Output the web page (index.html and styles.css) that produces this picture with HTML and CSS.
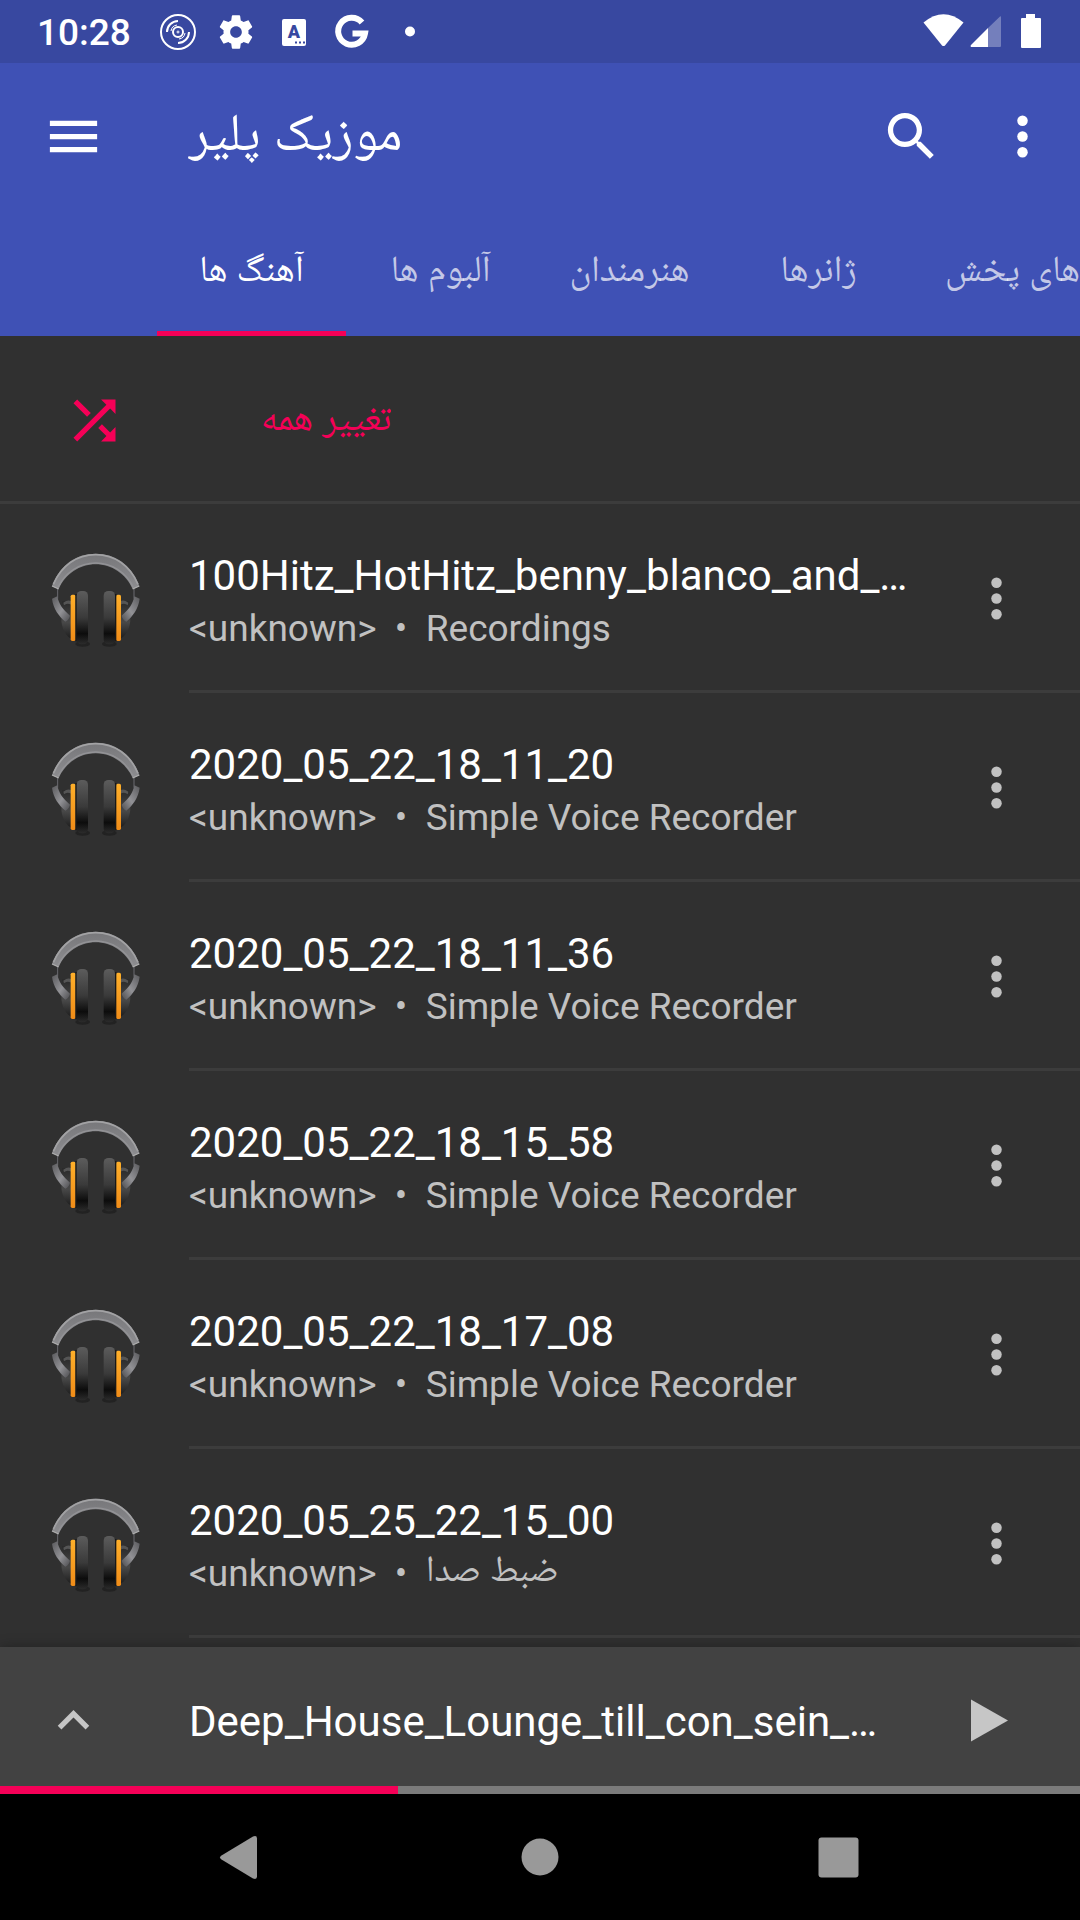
FILE: index.html
```html
<!DOCTYPE html>
<html lang="fa">
<head>
<meta charset="utf-8">
<meta name="viewport" content="width=device-width, initial-scale=1">
<title>موزیک پلیر</title>
<link rel="stylesheet" href="styles.css">
</head>
<body>
<svg class="sprite" aria-hidden="true">
  <defs>
    <linearGradient id="band" x1="0" y1="0" x2="0" y2="1">
      <stop offset="0" stop-color="#77777a"/><stop offset="1" stop-color="#8d8d90"/>
    </linearGradient>
    <linearGradient id="pad" x1="0" y1="0" x2="0" y2="1">
      <stop offset="0" stop-color="#5c5c5c"/><stop offset=".5" stop-color="#3a3a3a"/><stop offset=".8" stop-color="#0c0c0c"/><stop offset="1" stop-color="#2c2c2c"/>
    </linearGradient>
    <linearGradient id="shell" x1="0" y1="0" x2="0" y2="1">
      <stop offset="0" stop-color="#2a2a2a"/><stop offset=".55" stop-color="#484848"/><stop offset="1" stop-color="#1c1c1c"/>
    </linearGradient>
    <linearGradient id="arm" x1="0" y1="0" x2="1" y2="1">
      <stop offset="0" stop-color="#5a5a5d"/><stop offset=".55" stop-color="#929296"/><stop offset="1" stop-color="#4c4c4f"/>
    </linearGradient>
    <linearGradient id="ring" x1="0" y1="0" x2="0" y2="1">
      <stop offset="0" stop-color="#ffb02a"/><stop offset="1" stop-color="#f08c18"/>
    </linearGradient>
    <g id="cup">
      <path d="M96 214h32v114c-18-4-36-34-34-66z" fill="url(#shell)"/>
      <path d="M100 218q14-10 24-4v10q-14-6-22 2z" fill="#555"/>
      <path d="M83 176v30" stroke="#6a6a70" stroke-width="3"/>
      <path d="M66 206l16-7c4 22 16 40 38 58-2 8-6 14-14 18C86 258 70 236 66 206z" fill="url(#arm)"/>
      <rect x="122" y="194" width="15" height="139" rx="5" fill="url(#ring)"/>
      <rect x="136" y="192" width="6" height="142" fill="#181818"/>
      <rect x="140" y="183" width="34" height="160" rx="14" fill="url(#pad)"/>
    </g>
  </defs>
  <symbol id="headphones" viewBox="36 48 315 315">
    <ellipse cx="158" cy="342" rx="22" ry="8" fill="#222"/>
    <ellipse cx="238" cy="342" rx="22" ry="8" fill="#222"/>
    <use href="#cup"/>
    <use href="#cup" transform="translate(395 0) scale(-1 1)"/>
    <path d="M66 168C90 105 138 71 197 71s108 34 131 97l-20 9C288 132 245 103 197 103s-91 29-111 74z" fill="url(#band)"/>
    <path d="M70 163C94 107 140 74 197 74s104 33 127 89" fill="none" stroke="#a2a2a4" stroke-width="5"/>
    <path d="M84 172C106 127 148 99 197 99s91 28 113 73" fill="none" stroke="#939396" stroke-width="4"/>
    <path d="M66 168l20 9M328 168l-20 9" stroke="#b0b0b0" stroke-width="4"/>
  </symbol>
  <symbol id="more" viewBox="0 0 24 24">
    <circle cx="12" cy="6" r="2"/><circle cx="12" cy="12" r="2"/><circle cx="12" cy="18" r="2"/>
  </symbol>
</svg>

<div class="app">
  <header class="header">
    <div class="status" dir="ltr">
      <time class="clock">10:28</time>
      <div class="notices">
        <svg class="notice" viewBox="0 0 40 40" fill="none" stroke="#fff">
          <circle cx="20" cy="20" r="17" stroke-width="2"/>
          <circle cx="20" cy="20" r="5" stroke-width="2"/><circle cx="20" cy="20" r="1" stroke-width="1"/>
          <path d="M9 20A11 11 0 0 1 20 9M31 20A11 11 0 0 1 20 31" stroke-width="2"/>
          <path d="M13 19a7 7 0 0 1 6-6M27 21a7 7 0 0 1-6 6" stroke-width="1"/>
        </svg>
        <svg class="notice" viewBox="0 0 24 24" fill="#fff"><path d="M19.43 12.98c.04-.32.07-.64.07-.98s-.03-.66-.07-.98l2.11-1.65c.19-.15.24-.42.12-.64l-2-3.46c-.12-.22-.39-.3-.61-.22l-2.49 1c-.52-.4-1.08-.73-1.69-.98l-.38-2.65C14.46 2.18 14.25 2 14 2h-4c-.25 0-.46.18-.49.42l-.38 2.65c-.61.25-1.17.59-1.69.98l-2.49-1c-.23-.09-.49 0-.61.22l-2 3.46c-.13.22-.07.49.12.64l2.11 1.65c-.04.32-.07.65-.07.98s.03.66.07.98l-2.11 1.65c-.19.15-.24.42-.12.64l2 3.46c.12.22.39.3.61.22l2.49-1c.52.4 1.08.73 1.69.98l.38 2.65c.03.24.24.42.49.42h4c.25 0 .46-.18.49-.42l.38-2.65c.61-.25 1.17-.59 1.69-.98l2.49 1c.23.09.49 0 .61-.22l2-3.46c.12-.22.07-.49-.12-.64l-2.11-1.65zM12 15.5c-1.93 0-3.5-1.57-3.5-3.5s1.57-3.5 3.5-3.5 3.5 1.57 3.5 3.5-1.57 3.5-3.5 3.5z"/></svg>
        <svg class="notice" viewBox="0 0 40 40"><rect x="8" y="7" width="24" height="27" rx="2" fill="#fff"/><text class="badge-letter" x="20" y="26" text-anchor="middle">A</text><path d="M21 30.500h2m2 0h2m2 0h2" stroke="#3848a0" stroke-width="2"/></svg>
        <svg class="notice" viewBox="0 0 40 40" fill="none" stroke="#fff" stroke-width="6"><path d="M30 10.500A13.500 13.500 0 1 0 33 21.500H20.500"/></svg>
        <svg class="notice" viewBox="0 0 40 40" fill="#fff"><circle cx="20" cy="19.500" r="5"/></svg>
      </div>
      <svg class="signals" viewBox="0 0 120 36" fill="#fff">
        <path d="M0.500 8.500Q20.500-8 40.500 8.500L22 31.500q-1.500 1-3 0z"/>
        <path d="M65 14L77 2.500q1-1 1 1V32q0 1-1 1H65z" opacity=".3"/>
        <path d="M65 14v19H48q-1-1 0-2z"/>
        <path d="M103 0h9v4h5q1 0 1 1v28q0 1-1 1H99q-1 0-1-1V5q0-1 1-1h4z"/>
      </svg>
    </div>
    <div class="toolbar" dir="ltr">
      <button class="icon-button" aria-label="منو"><svg class="icon" viewBox="0 0 24 24"><path d="M3 18h18v-2H3v2zm0-5h18v-2H3v2zm0-7v2h18V6H3z"/></svg></button>
      <h1 class="title" lang="fa">موزیک پلیر</h1>
      <button class="icon-button search" aria-label="جستجو"><svg class="icon" viewBox="0 0 24 24"><path d="M15.500 14h-.79l-.28-.27A6.470 6.470 0 0 0 16 9.500 6.500 6.500 0 1 0 9.500 16c1.610 0 3.090-.59 4.230-1.570l.27.28v.79l5 4.990L20.490 19l-4.990-5zm-6 0C7.010 14 5 11.990 5 9.500S7.010 5 9.500 5 14 7.010 14 9.500 11.990 14 9.500 14z"/></svg></button>
      <button class="icon-button" aria-label="بیشتر"><svg class="icon"><use href="#more"/></svg></button>
    </div>
    <nav class="tabs" dir="ltr">
      <a class="tab tab-active" href="#songs">آهنگ ها</a>
      <a class="tab" href="#albums">آلبوم ها</a>
      <a class="tab" href="#artists">هنرمندان</a>
      <a class="tab" href="#genres">ژانرها</a>
      <a class="tab" href="#playlists">لیست های پخش</a>
    </nav>
  </header>

  <main class="content" id="songs" dir="ltr">
    <button class="shuffle">
      <svg class="icon" viewBox="0 0 24 24"><path d="M10.590 9.170L5.410 4 4 5.410l5.170 5.170 1.420-1.410zM14.500 4l2.040 2.040L4 18.590 5.410 20 17.960 7.460 20 9.500V4h-5.500zm.33 9.410l-1.410 1.410 3.130 3.130L14.500 20H20v-5.500l-2.040 2.040-3.130-3.130z"/></svg>
      <span class="shuffle-label">تغییر همه</span>
    </button>
    <ul class="songs">
      <li class="song"><svg class="cover"><use href="#headphones"/></svg><div class="details"><div class="words"><p class="name">100Hitz_HotHitz_benny_blanco_and_…</p><p class="meta">&lt;unknown&gt;&nbsp; •&nbsp; Recordings</p></div><button class="icon-button song-more" aria-label="گزینه ها"><svg class="icon"><use href="#more"/></svg></button></div></li>
      <li class="song"><svg class="cover"><use href="#headphones"/></svg><div class="details"><div class="words"><p class="name">2020_05_22_18_11_20</p><p class="meta">&lt;unknown&gt;&nbsp; •&nbsp; Simple Voice Recorder</p></div><button class="icon-button song-more" aria-label="گزینه ها"><svg class="icon"><use href="#more"/></svg></button></div></li>
      <li class="song"><svg class="cover"><use href="#headphones"/></svg><div class="details"><div class="words"><p class="name">2020_05_22_18_11_36</p><p class="meta">&lt;unknown&gt;&nbsp; •&nbsp; Simple Voice Recorder</p></div><button class="icon-button song-more" aria-label="گزینه ها"><svg class="icon"><use href="#more"/></svg></button></div></li>
      <li class="song"><svg class="cover"><use href="#headphones"/></svg><div class="details"><div class="words"><p class="name">2020_05_22_18_15_58</p><p class="meta">&lt;unknown&gt;&nbsp; •&nbsp; Simple Voice Recorder</p></div><button class="icon-button song-more" aria-label="گزینه ها"><svg class="icon"><use href="#more"/></svg></button></div></li>
      <li class="song"><svg class="cover"><use href="#headphones"/></svg><div class="details"><div class="words"><p class="name">2020_05_22_18_17_08</p><p class="meta">&lt;unknown&gt;&nbsp; •&nbsp; Simple Voice Recorder</p></div><button class="icon-button song-more" aria-label="گزینه ها"><svg class="icon"><use href="#more"/></svg></button></div></li>
      <li class="song"><svg class="cover"><use href="#headphones"/></svg><div class="details"><div class="words"><p class="name">2020_05_25_22_15_00</p><p class="meta">&lt;unknown&gt;&nbsp; •&nbsp; <span>ضبط صدا</span></p></div><button class="icon-button song-more" aria-label="گزینه ها"><svg class="icon"><use href="#more"/></svg></button></div></li>
    </ul>
  </main>

  <section class="player" dir="ltr">
    <div class="player-row">
      <button class="icon-button" aria-label="باز کردن"><svg class="icon" viewBox="0 0 24 24"><path d="M12 8l-6 6 1.410 1.410L12 10.830l4.590 4.580L18 14z"/></svg></button>
      <p class="name now-playing">Deep_House_Lounge_till_con_sein_…</p>
      <button class="icon-button" aria-label="پخش"><svg class="icon" viewBox="0 0 63 63"><path d="M13 10.500v42l37-21z"/></svg></button>
    </div>
    <progress class="progress" value="398" max="1080" aria-label="پیشرفت پخش"></progress>
  </section>

  <nav class="system" dir="ltr">
    <button class="system-button" aria-label="بازگشت"><svg class="icon" viewBox="0 0 63 63"><path d="M11.500 29.500L43 10.500q4-1.500 4 2v38q0 3.500-4 2l-31.500-19q-3-2 0-4z"/></svg></button>
    <button class="system-button" aria-label="خانه"><svg class="icon" viewBox="0 0 63 63"><circle cx="31" cy="31" r="18.500"/></svg></button>
    <button class="system-button" aria-label="برنامه های اخیر"><svg class="icon" viewBox="0 0 63 63"><rect x="10.500" y="11.500" width="40" height="40" rx="3"/></svg></button>
  </nav>
</div>
</body>
</html>
```

FILE: styles.css
```css
* {
  box-sizing: border-box;
}

body {
  margin: 0;
  background: #303030;
  color: #fff;
  font-family: Roboto, "Noto Naskh Arabic UI", "Noto Naskh Arabic", "Noto Sans Arabic", "DejaVu Sans", sans-serif;
}

h1,
p,
ul {
  margin: 0;
  padding: 0;
}

button {
  border: 0;
  padding: 0;
  background: none;
  color: inherit;
  font: inherit;
}

svg {
  display: block;
  flex: none;
}

.sprite {
  position: absolute;
  width: 0;
  height: 0;
}

.app {
  display: flex;
  flex-direction: column;
  height: 100vh;
}

.icon {
  width: 63px;
  height: 63px;
  fill: currentColor;
}

.icon-button {
  flex: none;
}

/* Header */

.header {
  flex: none;
  background: #3f51b5;
}

.status {
  display: flex;
  align-items: center;
  height: 63px;
  padding: 0 37px;
  background: #3848a0;
}

.clock {
  width: 121px;
  padding-top: 2px;
  font-size: 37px;
  font-weight: 500;
  line-height: 40px;
}

.notices {
  display: flex;
  flex: 1;
  gap: 18px;
}

.notice {
  width: 40px;
  height: 40px;
}

.badge-letter {
  fill: #3848a0;
  font-size: 18px;
  font-weight: 900;
}

.signals {
  width: 120px;
  height: 36px;
}

.toolbar {
  display: flex;
  align-items: center;
  height: 147px;
  padding: 0 26px 0 42px;
}

.title {
  flex: 1;
  padding: 4px 0 0 84px;
  font-size: 53px;
  font-weight: 400;
  line-height: 64px;
}

.search {
  margin-right: 48px;
}

.tabs {
  display: flex;
  height: 126px;
  padding-left: 157px;
  overflow: hidden;
}

.tab {
  flex: none;
  min-width: 189px;
  padding: 4px 32px 0;
  color: rgba(255, 255, 255, 0.7);
  font-size: 37px;
  line-height: 120px;
  text-align: center;
  text-decoration: none;
  white-space: nowrap;
}

.tab-active {
  box-shadow: inset 0 -5px #f50057;
  color: #fff;
}

/* Song list */

.content {
  flex: 1;
  min-height: 0;
  overflow: hidden;
}

.shuffle {
  display: flex;
  align-items: center;
  width: 100%;
  height: 168px;
  padding-left: 63px;
  box-shadow: inset 0 -3px #3c3c3c;
  color: #f50057;
}

.shuffle-label {
  width: 130px;
  margin-left: 135px;
  padding-top: 4px;
  overflow: hidden;
  font-size: 38px;
  line-height: 56px;
  text-align: left;
  white-space: nowrap;
}

.songs {
  list-style: none;
}

.song {
  display: flex;
  align-items: center;
  height: 189px;
  padding-left: 42px;
}

.cover {
  width: 105px;
  height: 105px;
  margin-right: 42px;
}

.details {
  display: flex;
  flex: 1;
  align-items: center;
  height: 100%;
  min-width: 0;
  padding-right: 52px;
  box-shadow: inset 0 -3px #3c3c3c;
}

.words {
  flex: 1;
  min-width: 0;
  padding-top: 4px;
}

.name {
  overflow: hidden;
  font-size: 42px;
  line-height: 56px;
  text-overflow: ellipsis;
  white-space: nowrap;
}

.meta {
  color: #c1c1c1;
  font-size: 37px;
  line-height: 50px;
  white-space: nowrap;
}

.song-more {
  color: #c1c1c1;
}

/* Player */

.player {
  position: relative;
  flex: none;
  background: #424242;
  box-shadow: 0 0 12px rgba(0, 0, 0, 0.3);
}

.player-row {
  display: flex;
  align-items: center;
  height: 147px;
  padding: 0 59px 0 42px;
  color: #c6c6c6;
}

.now-playing {
  flex: 1;
  padding: 2px 0 0 84px;
  color: #fff;
}

/* The progress line lies over the bottom edge of the player */
.progress {
  position: absolute;
  bottom: 0;
  left: 0;
  display: block;
  width: 100%;
  height: 8px;
  border: 0;
  appearance: none;
}

.progress::-webkit-progress-bar {
  background: #7b7b7b;
}

.progress::-webkit-progress-value {
  background: #f50057;
}

.system {
  display: flex;
  flex: none;
  justify-content: center;
  gap: 236px;
  height: 126px;
  background: #000;
  color: #999;
}
```
